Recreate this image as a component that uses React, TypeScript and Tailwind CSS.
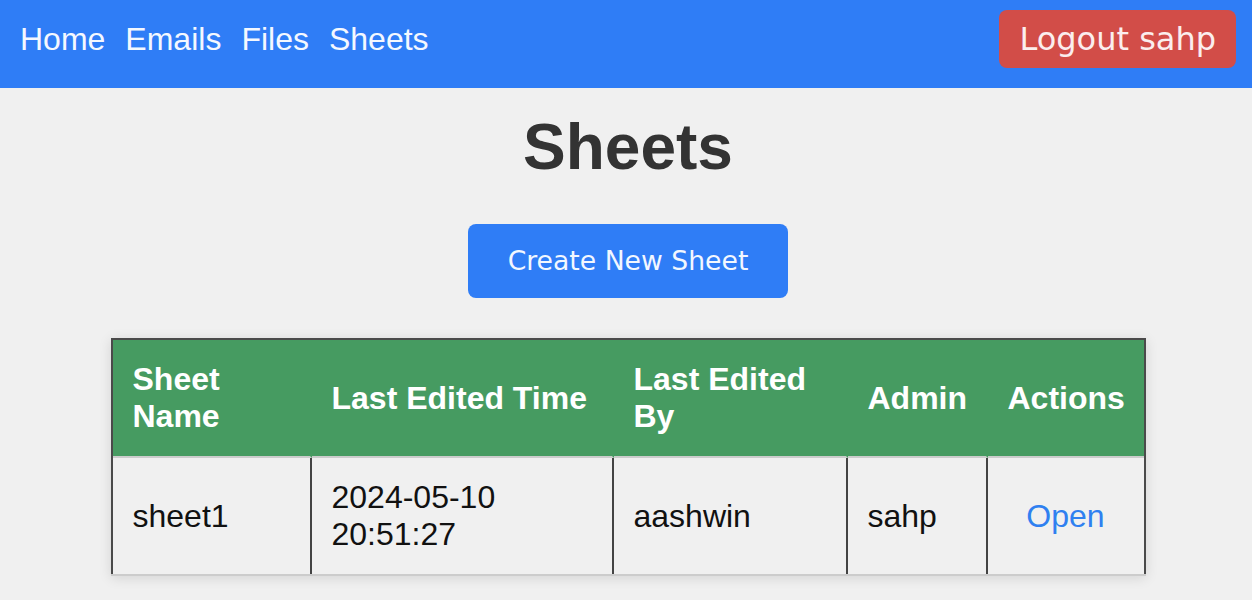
import React from "react";

const sheets = [
  {
    name: "sheet1",
    time: "2024-05-10 20:51:27",
    by: "aashwin",
    admin: "sahp",
  },
];

function Navbar() {
  return (
    <nav className="flex h-[88px] items-center bg-[#2f7df6] pb-[10px] pl-5 pr-4">
      <div className="flex gap-5 text-[32px] text-[#f4f8ff]">
        <a href="#">Home</a>
        <a href="#">Emails</a>
        <a href="#">Files</a>
        <a href="#">Sheets</a>
      </div>
      <button
        className="ml-auto rounded-[8px] bg-[#d24d48] px-5 py-[10px] text-[32px] text-[#fbeeee]"
        style={{ fontFamily: '"DejaVu Sans", sans-serif' }}
      >
        Logout sahp
      </button>
    </nav>
  );
}

export default function App() {
  return (
    <div
      className="min-h-[600px] bg-[#f0f0f0] pb-6 leading-[normal]"
      style={{ fontFamily: '"Liberation Sans", Arial, sans-serif' }}
    >
      <Navbar />
      <main className="pl-1">
        <h1 className="mt-[22px] text-center text-[64px] font-bold text-[#333]">
          Sheets
        </h1>
        <div className="mt-[40px] flex justify-center">
          <button
            className="rounded-[8px] bg-[#2f7df6] px-10 py-[21px] text-[26.67px] leading-[32px] text-[#f2f7ff]"
            style={{ fontFamily: '"DejaVu Sans", sans-serif' }}
          >
            Create New Sheet
          </button>
        </div>
        <div className="mx-auto mt-[40px] w-[1035px] border-b-2 border-[#cccccc] shadow-[0_2px_12px_rgba(0,0,0,0.12)]">
          <table className="w-full table-fixed border-separate border-spacing-0 border-x-2 border-t-2 border-[#4a4a4a] text-[32px]">
            <thead>
              <tr className="bg-[#469b61] text-left text-white">
                <th className="w-[199px] border-b-2 border-r-2 border-b-[#cccccc] border-r-transparent px-5 py-[21px] font-bold">
                  Sheet Name
                </th>
                <th className="w-[302px] border-b-2 border-r-2 border-b-[#cccccc] border-r-transparent px-5 py-[21px] font-bold">
                  Last Edited Time
                </th>
                <th className="w-[234px] border-b-2 border-r-2 border-b-[#cccccc] border-r-transparent px-5 py-[21px] font-bold">
                  Last Edited By
                </th>
                <th className="w-[140px] border-b-2 border-r-2 border-b-[#cccccc] border-r-transparent px-5 py-[21px] font-bold">
                  Admin
                </th>
                <th className="border-b-2 border-[#cccccc] px-5 py-[21px] font-bold">
                  Actions
                </th>
              </tr>
            </thead>
            <tbody>
              {sheets.map((s) => (
                <tr key={s.name} className="text-[#111]">
                  <td className="border-r-2 border-[#444] px-5 py-[21px]">{s.name}</td>
                  <td className="border-r-2 border-[#444] px-5 py-[21px]">{s.time}</td>
                  <td className="border-r-2 border-[#444] px-5 py-[21px]">{s.by}</td>
                  <td className="border-r-2 border-[#444] px-5 py-[21px]">{s.admin}</td>
                  <td className="px-5 py-[21px] text-center">
                    <a href="#" className="text-[#2f80f0]">
                      Open
                    </a>
                  </td>
                </tr>
              ))}
            </tbody>
          </table>
        </div>
      </main>
    </div>
  );
}
